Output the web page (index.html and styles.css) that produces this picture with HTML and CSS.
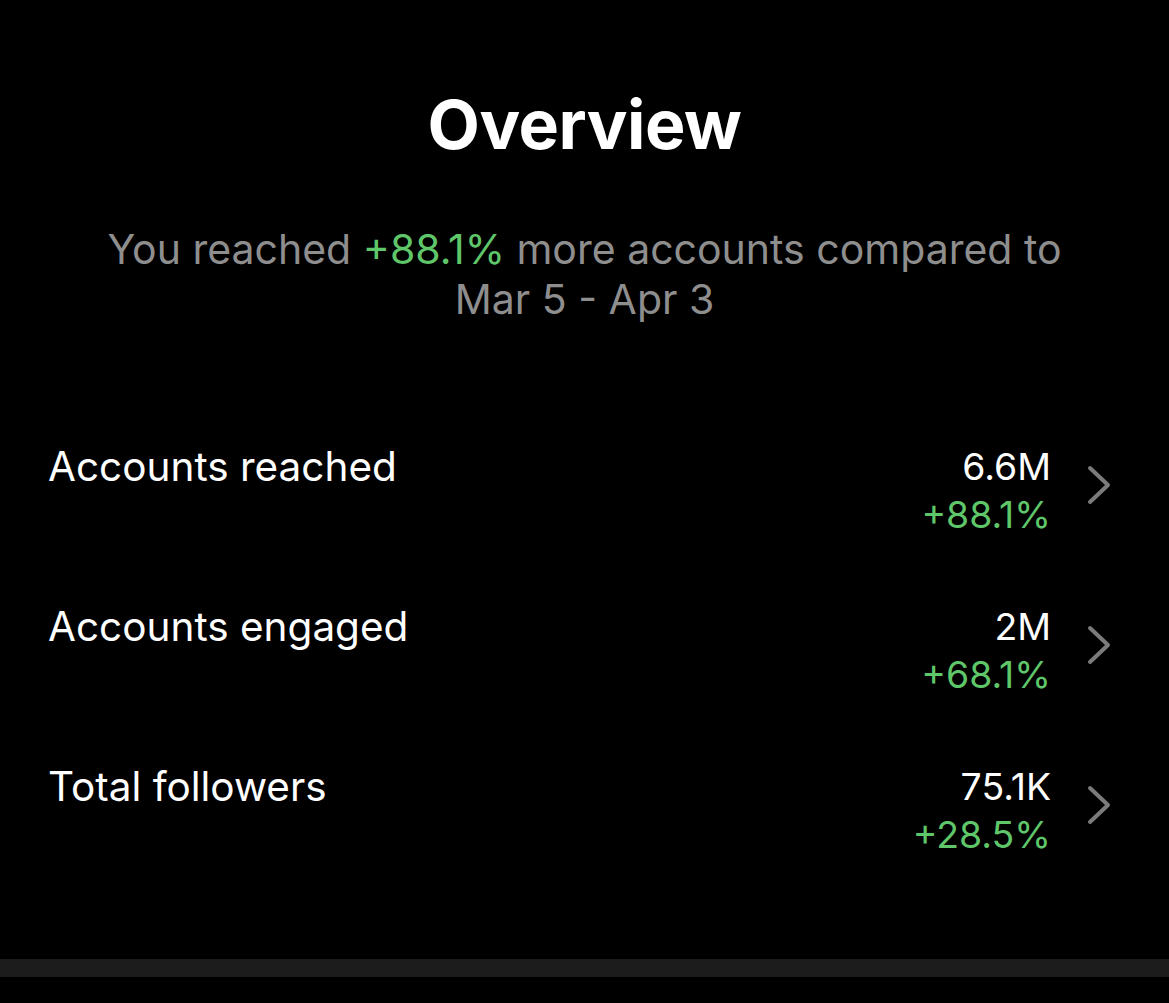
FILE: index.html
```html
<!DOCTYPE html>
<html>
<head>
<meta charset="utf-8">
<link rel="stylesheet" href="styles.css">
</head>
<body>
<main class="page">
  <h1 class="title">Overview</h1>
  <p class="summary">You reached <span class="up">+88.1%</span> more accounts compared to<br>Mar 5 - Apr 3</p>
  <ul class="rows">
    <li class="row">
      <span class="label">Accounts reached</span>
      <span class="stats"><span class="value">6.6M</span><span class="up">+88.1%</span></span>
      <svg class="chev" viewBox="0 0 24 40" width="24" height="40"><path d="M3 3 L21 20 L3 37" fill="none" stroke="#7b7b7b" stroke-width="4" stroke-linecap="round" stroke-linejoin="round"/></svg>
    </li>
    <li class="row">
      <span class="label">Accounts engaged</span>
      <span class="stats"><span class="value">2M</span><span class="up">+68.1%</span></span>
      <svg class="chev" viewBox="0 0 24 40" width="24" height="40"><path d="M3 3 L21 20 L3 37" fill="none" stroke="#7b7b7b" stroke-width="4" stroke-linecap="round" stroke-linejoin="round"/></svg>
    </li>
    <li class="row">
      <span class="label">Total followers</span>
      <span class="stats"><span class="value">75.1K</span><span class="up">+28.5%</span></span>
      <svg class="chev" viewBox="0 0 24 40" width="24" height="40"><path d="M3 3 L21 20 L3 37" fill="none" stroke="#7b7b7b" stroke-width="4" stroke-linecap="round" stroke-linejoin="round"/></svg>
    </li>
  </ul>
  <div class="divider"></div>
</main>
</body>
</html>
```
FILE: styles.css
```css
html, body {
  margin: 0;
  padding: 0;
  background: #000;
}
body {
  font-family: Inter, "Liberation Sans", sans-serif;
  color: #fff;
  width: 1169px;
  height: 1003px;
  overflow: hidden;
}
.page {
  display: flex;
  flex-direction: column;
}
.title {
  margin: 82px 0 0;
  text-align: center;
  font-size: 68px;
  font-weight: 700;
  line-height: 84px;
  letter-spacing: -0.5px;
}
.summary {
  margin: 58px 0 0;
  text-align: center;
  color: #8e8e8e;
  font-size: 41px;
  line-height: 50px;
}
.up {
  color: #5fc76a;
}
.rows {
  list-style: none;
  margin: 119px 0 0;
  padding: 0 58px 0 48px;
  display: flex;
  flex-direction: column;
  gap: 64px;
}
.row {
  display: flex;
  align-items: flex-start;
  height: 96px;
}
.label {
  flex: 1;
  font-size: 40.5px;
  line-height: 48px;
}
.stats {
  display: flex;
  flex-direction: column;
  align-items: flex-end;
  font-size: 37.4px;
  line-height: 48px;
  margin-right: 36px;
}
.chev {
  margin-top: 22px;
}
.divider {
  margin-top: 100px;
  height: 18px;
  background: #1c1c1c;
}
```
